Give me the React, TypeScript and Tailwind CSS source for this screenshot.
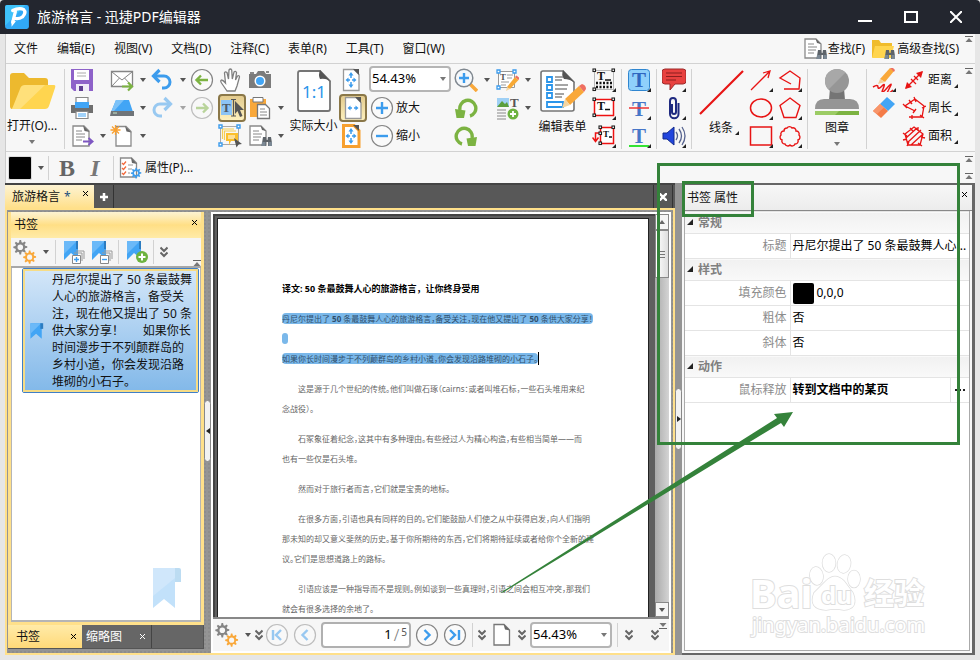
import type { ReactNode } from "react";

const MENUS = ["文件", "编辑(E)", "视图(V)", "文档(D)", "注释(C)", "表单(R)", "工具(T)", "窗口(W)"];

const BOOKMARK_TEXT = [
  "丹尼尔提出了 50 条最鼓舞",
  "人心的旅游格言，备受关",
  "注，现在他又提出了 50 条",
  "供大家分享！      如果你长",
  "时间漫步于不列颠群岛的",
  "乡村小道，你会发现沿路",
  "堆砌的小石子。",
];

const PARAGRAPHS: string[][] = [
  ["这是源于几个世纪的传统。他们叫做石琢（cairns：或者叫堆石标，一些石头堆用来纪", "念战役）。"],
  ["石冢象征着纪念，这其中有多种理由。有些经过人为精心构造，有些相当简单——而", "也有一些仅是石头堆。"],
  ["然而对于旅行者而言，它们就是宝贵的地标。"],
  [
    "在很多方面，引语也具有同样的目的。它们能鼓励人们使之从中获得启发，向人们指明",
    "那未知的却又意义斐然的历史。基于你所期待的东西，它们将期待延续或者给你个全新的建",
    "议。它们是思想道路上的路标。",
  ],
  ["引语应该是一种指导而不是规则。例如谈到一些真理时，引语之间会相互冲突，那我们", "就会有很多选择的余地了。"],
];

/* ---------- small building blocks ---------- */

function Icon({ children, className = "size-6" }: { children: ReactNode; className?: string }) {
  return (
    <svg viewBox="0 0 24 24" className={`shrink-0 ${className}`} fill="none" aria-hidden="true">
      {children}
    </svg>
  );
}

function Caret({ className = "h-1 w-1.5 text-[#555]" }: { className?: string }) {
  return (
    <svg viewBox="0 0 6 4" className={`shrink-0 ${className}`} aria-hidden="true">
      <path d="M0 0h6L3 4z" fill="currentColor" />
    </svg>
  );
}

/** Tool button; `menu` adds the drop-down caret next to the icon. */
function Tool({ label, menu, faded, active, children }: {
  label: string;
  menu?: boolean;
  faded?: boolean;
  active?: boolean;
  children: ReactNode;
}) {
  return (
    <button
      type="button"
      aria-label={label}
      className={`flex h-7 items-center gap-1.5 ${faded ? "opacity-50" : ""} ${
        active ? "w-7 justify-center rounded border-2 border-[#8a7748] bg-gradient-to-b from-[#e3cb8d] to-[#fdf0bd]" : ""
      }`}
    >
      {children}
      {menu ? <Caret /> : null}
    </button>
  );
}

/** Tool with the tiny corner triangle that opens a flyout. */
function Flyout({ label, text, children }: { label: string; text?: string; children: ReactNode }) {
  return (
    <button type="button" aria-label={label} className="relative flex h-7 items-center gap-0.5 pr-1">
      {children}
      {text ? <span>{text}</span> : null}
      <Corner className={text ? "-right-0.5 bottom-1.5" : "right-1 bottom-0.5"} />
    </button>
  );
}

function Corner({ className }: { className: string }) {
  return (
    <svg viewBox="0 0 4 4" className={`absolute size-1 ${className}`} aria-hidden="true">
      <path d="M4 0v4H0z" fill="#222" />
    </svg>
  );
}

function Col({ children, className = "" }: { children: ReactNode; className?: string }) {
  return <div className={`flex shrink-0 flex-col items-start ${className}`}>{children}</div>;
}

function Sep({ className = "mx-[5px] h-20" }: { className?: string }) {
  return <div className={`w-px shrink-0 self-center bg-[#d2d2d2] ${className}`} />;
}

function CollapseMark({ className = "" }: { className?: string }) {
  return (
    <svg viewBox="0 0 8 6" className={`h-1.5 w-2 shrink-0 ${className}`} aria-hidden="true">
      <path d="M0 .5h8" stroke="#666" />
      <path d="M4 2l3.5 4h-7z" fill="#777" />
    </svg>
  );
}

function Chevrons() {
  return (
    <svg viewBox="0 0 8 12" className="h-3 w-2 shrink-0" fill="none" stroke="#666" strokeWidth="2" aria-hidden="true">
      <path d="M.5 1.5L4 5l3.5-3.5M.5 6.500L4 10l3.500-3.500" />
    </svg>
  );
}

function CloseX({ className = "size-[5px] text-black", width = 1.2 }: { className?: string; width?: number }) {
  return (
    <svg viewBox="0 0 6 6" className={`shrink-0 ${className}`} stroke="currentColor" strokeWidth={width} aria-hidden="true">
      <path d="M0 0l6 6M6 0L0 6" />
    </svg>
  );
}

/* ---------- icons ---------- */

function Sheet() {
  return (
    <>
      <path d="M4 1.500h10l5.500 5.500v15H4z" fill="#fff" stroke="#777" strokeWidth="1.300" />
      <path d="M13.500 1L20 7.500 15 6.500z" fill="#666" />
    </>
  );
}

function Binoculars() {
  return (
    <g fill="#5d6369">
      <path d="M15 13h3l.5 3h1l.5-3h3l1.500 9h-4.500v-4h-2v4H13.500z" />
      <path d="M14 18h3.500v4H13.500zM20.500 18H24v4h-3.500z" fill="#7b8894" />
    </g>
  );
}

function FindIcon() {
  return (
    <Icon>
      <path d="M2 2h11l5 5v14H2z" fill="#fff" stroke="#8a8a8a" strokeWidth="1.300" />
      <path d="M12.500 1.500L18 7l-4-1z" fill="#666" />
      <path d="M5 7h6M5 10h9M5 13h8M5 16h6" stroke="#888" strokeWidth="1.200" />
      <Binoculars />
    </Icon>
  );
}

const GEAR = "M10 2h2l.6 2.700 1.500.6 2.300-1.500 1.500 1.500-1.500 2.300.6 1.500 2.700.6v2l-2.700.6-.6 1.500 1.500 2.300-1.500 1.500-2.300-1.500-1.500.6L12 20h-2l-.6-2.800-1.500-.6-2.300 1.500-1.500-1.500 1.500-2.300-.6-1.500L2.300 12v-2L5 9.400l.6-1.500-1.500-2.300 1.500-1.500 2.300 1.500L9.400 5zM11 7.500a3.500 3.500 0 100 7 3.500 3.500 0 000-7z";

function Gears() {
  return (
    <Icon>
      <g transform="translate(-1.500 -1.500) scale(.8)"><path d={GEAR} fill="#858585" fillRule="evenodd" /></g>
      <g transform="translate(8.500 9) scale(.74)"><path d={GEAR} fill="#f9a83a" fillRule="evenodd" /></g>
    </Icon>
  );
}

function Ribbon({ children }: { children?: ReactNode }) {
  return (
    <Icon>
      <path d="M2 1h14v18l-7-6-7 7z" fill="#42a5f5" />
      <path d="M2 1h13L2 14z" fill="#6bb9f8" />
      <path d="M14 1h2v8h-2z" fill="#2c7cc0" />
      {children}
    </Icon>
  );
}

function Pencil() {
  return (
    <>
      <path d="M12 19L20 9l3.500 3-8.500 9z" fill="#f7a935" />
      <path d="M20 9l1.500-1.500L24.500 10l-1 2z" fill="#ef6f61" />
      <path d="M12 19l-1 4 4-2z" fill="#f5d5a0" />
    </>
  );
}

function FitIcon({ wide, bordered }: { wide?: boolean; bordered?: boolean }) {
  return (
    <Icon>
      <path d="M4.500 1.500H15l5 5v16H4.500z" fill="#fff" stroke={bordered ? "#f7a02f" : "#999"} strokeWidth={bordered ? 3 : 1.300} />
      <path d="M14 1h6v6z" fill="#555" />
      <path d="M9.500 9.500L6.500 12l3 2.500zM14.500 9.500l3 2.500-3 2.500z" fill="#3c9ced" />
      <path d="M9 12h2M13 12h2" stroke="#3c9ced" strokeWidth="1.500" />
      {wide ? null : (
        <>
          <path d="M9.500 7.500L12 4l2.500 3.500zM9.500 16.500L12 20l2.500-3.500z" fill="#3c9ced" />
          <path d="M12 7v3M12 14v3" stroke="#3c9ced" strokeWidth="1.500" />
        </>
      )}
    </Icon>
  );
}

function CircleIcon({ d, color = "#3c9ced" }: { d: string; color?: string }) {
  return (
    <Icon>
      <circle cx="12" cy="12" r="10.500" fill="#fafafa" stroke="#858585" strokeWidth="1.200" />
      <path d={d} stroke={color} strokeWidth="2.400" />
    </Icon>
  );
}

function RotateIcon({ flip }: { flip?: boolean }) {
  return (
    <Icon className={`size-6 ${flip ? "-scale-x-100" : ""}`}>
      <path d="M16 20A8 8 0 1 0 6 14" stroke="#7cb342" strokeWidth="3.400" />
      <path d="M1 13l10.500 1.500L10 22H2.500z" fill="#7cb342" />
    </Icon>
  );
}

function Squares({ at }: { at: number[][] }) {
  return (
    <>
      {at.map(([x, y]) => (
        <rect key={`${x}-${y}`} x={x} y={y} width="2.500" height="2.500" fill="#fff" stroke="#222" strokeWidth="1.100" />
      ))}
    </>
  );
}

function SerifT({ x, y, size, fill }: { x: number; y: number; size: number; fill: string }) {
  return (
    <text x={x} y={y} fontSize={size} fontFamily="Liberation Serif, serif" fontWeight="bold" fill={fill}>T</text>
  );
}

const PENTAGON = "M12 2l10 7.500-4 12H6l-4-12z";

function PawMark() {
  return (
    <svg viewBox="0 0 52 58" className="h-[58px] w-[52px]" fill="#fff" stroke="#dedede" strokeWidth="1.500" aria-hidden="true">
      <ellipse cx="20" cy="10" rx="6.500" ry="9" />
      <ellipse cx="35" cy="11" rx="6.500" ry="9" transform="rotate(10 35 11)" />
      <ellipse cx="7.500" cy="23" rx="6.500" ry="9" transform="rotate(-8 7 23)" />
      <ellipse cx="45" cy="26" rx="6" ry="8.500" />
      <path d="M17 28q9-9 18 0l9 12q6 16-9 17-9-2-18 0-18-1-12-17z" />
    </svg>
  );
}

/* ---------- window chrome ---------- */

function TitleBar() {
  return (
    <header className="flex h-[34px] shrink-0 items-center rounded-t bg-[#23262f] pr-[18px] pl-1 text-white">
      <Icon className="size-[26px]">
        <rect x="1" y="1" width="22" height="22" rx="2" fill="#31a9f6" />
        <path d="M1 20L20 1H3a2 2 0 00-2 2z" fill="#3fc2fa" />
        <path d="M8 6q6-3 10-1 3 3-1 7-3 2-6 1.500M10.500 7L8 17" stroke="#fff" strokeWidth="3" strokeLinecap="round" />
        <path d="M7 15l4 1-4 5z" fill="#fff" />
      </Icon>
      <h1 className="ml-[7px] flex-1 text-sm">旅游格言 - 迅捷PDF编辑器</h1>
      <div className="flex items-center gap-8">
        <button type="button" aria-label="最小化" className="flex size-3.5 items-center pt-2">
          <span className="h-0.5 w-full bg-white" />
        </button>
        <button type="button" aria-label="最大化" className="h-3 w-3.5 border-2 border-white" />
        <button type="button" aria-label="关闭">
          <CloseX className="size-3 text-white" width={1} />
        </button>
      </div>
    </header>
  );
}

function MenuBar() {
  return (
    <nav className="flex h-[30px] shrink-0 items-center border-b border-[#d2d2d2] pr-0.5 pl-2">
      <div className="flex flex-1 gap-[19px]">
        {MENUS.map((m) => (
          <button key={m} type="button">{m}</button>
        ))}
      </div>
      <button type="button" className="flex items-center gap-px">
        <FindIcon />
        查找(F)
      </button>
      <button type="button" className="ml-1.5 flex items-center gap-0.5">
        <Icon>
          <path d="M1 3h7l2 3h11v14H1z" fill="#f0bc2c" />
          <path d="M4 9h19l-3 12H1z" fill="#ffd54f" />
          <Binoculars />
        </Icon>
        高级查找(S)
      </button>
      <CollapseMark className="mt-0.5 ml-1.5 self-start" />
    </nav>
  );
}

function FileTools() {
  return (
    <>
      <button type="button" className="flex w-[58px] shrink-0 flex-col items-center pr-1.5">
        <svg viewBox="0 0 48 40" className="mt-1.5 h-10 w-12" aria-hidden="true">
          <path d="M2 4q0-3 3-3h11l5 5h16q3 0 3 3v22L4 37q-2 0-2-3z" fill="#edb92e" />
          <path d="M17 13h29q2 0 1 3l-6 18q-1 3-4 3H4z" fill="#ffd54f" />
          <path d="M17 13h20L12 37H4l8-20q1-4 5-4z" fill="#ffe07a" />
        </svg>
        <span className="mt-1.5 leading-4 whitespace-nowrap">打开(O)...</span>
        <Caret className="mt-1.5 h-1 w-2 text-[#777]" />
      </button>
      <Sep className="mr-[5px] h-20" />
      <Col className="w-10">
        <Tool label="保存">
          <Icon>
            <path d="M1 1h22v22H4l-3-3z" fill="#8e62c9" />
            <path d="M4 2h15v10H4z" fill="#fff" />
            <path d="M7 5h9M7 8h9" stroke="#aaa" />
            <path d="M6 16h13v7H6z" fill="#f0eaf8" />
            <path d="M9 18h4v5H9z" fill="#5e3d91" />
          </Icon>
        </Tool>
        <Tool label="打印">
          <Icon>
            <path d="M6 1.500h12V7H6z" fill="#fff" stroke="#888" strokeWidth="1.200" />
            <path d="M1 9h22v8H1z" fill="#6f6f6f" />
            <path d="M5 6h14v6H5z" fill="#42a5f5" />
            <path d="M6 15.500h12v7H6z" fill="#fff" stroke="#888" strokeWidth="1.200" />
            <path d="M8 18h8M8 20h8" stroke="#42a5f5" />
          </Icon>
        </Tool>
        <Tool label="导出" menu>
          <Icon>
            <path d="M3 2h11l5 5v15H3z" fill="#fff" stroke="#8a8a8a" strokeWidth="1.300" />
            <path d="M13 1.500L19.500 8 14.500 7z" fill="#666" />
            <path d="M6 7h6M6 10h9M6 13h9M6 16h6" stroke="#888" />
            <path d="M13 17.500h9M18.500 14l4 3.500-4 3.500" stroke="#7e57c2" strokeWidth="2" />
          </Icon>
        </Tool>
      </Col>
      <Col className="w-10">
        <Tool label="邮件" menu>
          <Icon>
            <path d="M1.500 3.500h21v15h-21z" fill="#fff" stroke="#858585" strokeWidth="1.300" />
            <path d="M2 4l10 8L22 4M2 18l7.500-8M22 18l-7.500-8" stroke="#858585" />
            <path d="M12 18.500h9M18 14.500l4 4-4 4" stroke="#7cb342" strokeWidth="2.200" />
          </Icon>
        </Tool>
        <Tool label="扫描" menu>
          <Icon>
            <path d="M6 4h13l4 12H1z" fill="#42a5f5" />
            <path d="M6 4h8L4 15H1.500z" fill="#7cc2f8" />
            <path d="M1 15h23v5H0z" fill="#6f7478" />
            <path d="M3 17h4" stroke="#c8e6c9" />
          </Icon>
        </Tool>
        <Tool label="新建" menu>
          <Icon>
            <path d="M6 2.500h10l5 5V22H6z" fill="#fff" stroke="#8a8a8a" strokeWidth="1.300" />
            <path d="M15 2L21.500 8.500 16.500 7.500z" fill="#666" />
            <path d="M5.500 1v10M.5 6h10M2 2.500l7 7M9 2.500l-7 7" stroke="#f9a02f" strokeWidth="1.300" />
          </Icon>
        </Tool>
      </Col>
      <Col className="w-10">
        <Tool label="撤销" menu>
          <Icon>
            <path d="M5 8h9a6 6 0 010 12h-2" stroke="#3c9ced" strokeWidth="3" />
            <path d="M9.500 2L3.500 8l6 6" stroke="#3c9ced" strokeWidth="3.200" />
          </Icon>
        </Tool>
        <Tool label="重做" menu faded>
          <Icon>
            <path d="M19 8h-9a6 6 0 000 12h2" stroke="#3c9ced" strokeWidth="3" />
            <path d="M14.500 2l6 6-6 6" stroke="#3c9ced" strokeWidth="3.200" />
          </Icon>
        </Tool>
      </Col>
      <Col className="w-7">
        <Tool label="后退"><CircleIcon d="M18 12H7M11 7.500L6.500 12l4.500 4.500" color="#7cb342" /></Tool>
        <Tool label="前进" faded><CircleIcon d="M6 12h11M13 7.500l4.500 4.500-4.500 4.500" color="#7cb342" /></Tool>
      </Col>
      <Col className="w-[30px] items-center pr-0.5">
        <Tool label="手形工具">
          <Icon>
            <path d="M9 23l-5.500-8q-1.500-2.500 0-3 1.500 0 4 3L6.500 5q.5-2 2.500-.5L10.500 11 11 2q1.500-2 2.700 0l.6 9 1.700-7q1.500-1.500 2.500.5L17.500 12l2-4q2-1 2 1L19 18l-2 5z" fill="#fff" stroke="#808080" strokeWidth="1.300" />
          </Icon>
        </Tool>
        <Tool label="选择文本" active>
          <Icon>
            <path d="M1 4h11v15H1z" fill="#8cc4f5" />
            <SerifT x={2} y={16} size={13} fill="#4e5a66" />
            <path d="M11 3.500h5M11 20h5M13.500 4v16" stroke="#555" strokeWidth="1.200" />
            <path d="M15 5l9 9h-4l2.500 6-2.500 1-2.500-6L15 18z" fill="#555" />
          </Icon>
        </Tool>
        <Tool label="选择注释">
          <Icon>
            <path d="M2.500 2.500h18v18h-18z" stroke="#aaa" />
            <path d="M4.500 15V5H16M6.500 16V7H18" stroke="#f6cd52" strokeWidth="1.200" />
            <path d="M8 9h12v8h-7l-2 4v-4H8z" fill="#fbc02d" />
            <path d="M10 12h7M10 14h7" stroke="#fff" />
            <path d="M1 1h3v3H1zM19 1h3v3h-3zM1 19h3v3H1z" fill="#fff" stroke="#3c9ced" strokeWidth="1.400" />
            <path d="M16 14l8 6-3.500.5-2 3z" fill="#555" />
          </Icon>
        </Tool>
      </Col>
      <Col className="w-10">
        <Tool label="快照">
          <Icon>
            <path d="M1 6h7l2-3h6l2 3h5v14H1z" fill="#7b7b7b" />
            <path d="M2 5h4M18 4h3" stroke="#666" strokeWidth="1.500" />
            <circle cx="12" cy="13" r="5.500" fill="#fff" />
            <circle cx="12" cy="13" r="4" fill="#42a5f5" />
          </Icon>
        </Tool>
        <Tool label="粘贴" menu>
          <Icon>
            <path d="M2 3h16v18H2z" fill="#f9a83a" />
            <path d="M5 1.500h10V6H5z" fill="#fff" stroke="#777" />
            <path d="M9.500 8.500h8l4 4v10H9.500z" fill="#fff" stroke="#777" strokeWidth="1.300" />
            <path d="M12 13h5M12 16h7M12 19h7" stroke="#888" />
          </Icon>
        </Tool>
        <Tool label="搜索" menu><FindIcon /></Tool>
      </Col>
    </>
  );
}

function ZoomTools() {
  return (
    <>
      <button type="button" className="flex w-[51px] shrink-0 flex-col items-center">
        <svg viewBox="0 0 34 42" className="mt-1 h-[42px] w-[34px]" aria-hidden="true">
          <path d="M3 1h20l10 10v28q0 2-2 2H3q-2 0-2-2V3q0-2 2-2z" fill="#fff" stroke="#757575" strokeWidth="1.800" />
          <path d="M23 0l11 12q-4-4-11-3-2-4 0-9z" fill="#555" />
          <text x="17" y="28" textAnchor="middle" fontSize="17" fill="#2b95ea" fontFamily="Noto Sans, sans-serif">1:1</text>
        </svg>
        <span className="mt-1.5 leading-4">实际大小</span>
      </button>
      <Col className="w-[30px] items-center">
        <Tool label="适合页面"><FitIcon /></Tool>
        <Tool label="适合宽度" active><FitIcon wide /></Tool>
        <Tool label="适合可见区域"><FitIcon bordered /></Tool>
      </Col>
      <div className="flex w-[85px] shrink-0 flex-col">
        <ZoomSelect id="zoom-top" className="h-[26px] w-[82px]" />
        <button type="button" className="mt-0.5 flex h-7 items-center gap-0.5 pl-px">
          <CircleIcon d="M12 6v12M6 12h12" />
          放大
        </button>
        <button type="button" className="flex h-7 items-center gap-0.5 pl-px">
          <CircleIcon d="M6 12h12" />
          缩小
        </button>
      </div>
      <Col className="w-[41px]">
        <Tool label="放大镜" menu>
          <Icon>
            <path d="M16 16l7 7" stroke="#f9a83a" strokeWidth="3.500" />
            <circle cx="10" cy="10" r="8.800" fill="#f5f8fb" stroke="#808890" strokeWidth="1.500" />
            <path d="M10 5v10M5 10h10" stroke="#3c9ced" strokeWidth="2.400" />
          </Icon>
        </Tool>
        <Tool label="逆时针旋转"><RotateIcon /></Tool>
        <Tool label="顺时针旋转"><RotateIcon flip /></Tool>
      </Col>
      <Col className="w-[41px]">
        <Tool label="编辑内容" menu>
          <Icon>
            <path d="M3.500 3.500h16v16h-16z" fill="#fff" stroke="#999" />
            <SerifT x={5} y={12} size={9} fill="#555" />
            <path d="M12 7h6M12 10h5M6 14h8M6 17h5" stroke="#999" />
            <path d="M2 2h3v3H2zM18 2h3v3h-3zM2 18h3v3H2z" fill="#fff" stroke="#3c9ced" strokeWidth="1.300" />
            <Pencil />
          </Icon>
        </Tool>
        <Tool label="添加内容" menu>
          <Icon>
            <path d="M2 2h12v9H2z" fill="#9fd0f5" />
            <path d="M2 11l5-6 3 3 2-2 2 5z" fill="#5b9e3d" />
            <SerifT x={15} y={11} size={13} fill="#555" />
            <path d="M2 14h9M2 17h9M2 20h9M2 23h9" stroke="#888" />
            <circle cx="18" cy="18" r="5.500" fill="#6db33f" />
            <path d="M18 15v6M15 18h6" stroke="#fff" strokeWidth="1.800" />
          </Icon>
        </Tool>
      </Col>
      <button type="button" className="flex w-[53px] shrink-0 flex-col items-center">
        <svg viewBox="0 0 48 44" className="mt-[3px] h-11 w-12" aria-hidden="true">
          <path d="M4 2h20l11 11v27q0 2-2 2H4q-2 0-2-2V4q0-2 2-2z" fill="#fff" stroke="#757575" strokeWidth="1.600" />
          <path d="M24 1l12 13q-5-4-11-4-3-4-1-9z" fill="#555" />
          <g fill="none" stroke="#2b95ea" strokeWidth="1.800">
            <path d="M8 8h5v5H8zM8 16h5v5H8zM8 24h5v5H8zM8 33h16v5H8z" />
          </g>
          <path d="M16 8h8M16 11h7M16 16h13M16 20h12M16 25h9M16 28h7" stroke="#888" strokeWidth="1.300" />
          <path d="M26 30l14-13 5 6-14 13z" fill="#f9a83a" />
          <path d="M40 17l3-2q4 1 4 5l-2 3z" fill="#ef6f61" />
          <path d="M26 30l-3 9 8-3z" fill="#f5d5a0" />
        </svg>
        <span className="mt-1.5 leading-4">编辑表单</span>
      </button>
    </>
  );
}

function CommentTools() {
  return (
    <>
      <Col className="ml-[3px] w-6">
        <Flyout label="打字机">
          <Icon>
            <path d="M2.500 2.500h19v19h-19z" stroke="#777" strokeDasharray="1 1" />
            <SerifT x={5} y={12} size={12} fill="#111" />
            <path d="M13 12h6" stroke="#111" strokeWidth="1.500" />
            <path d="M4 15h16M4 19h16" stroke="#111" strokeWidth="2.400" strokeDasharray="2 1.500" />
            <Squares at={[[1, 1], [20, 1], [1, 20]]} />
          </Icon>
        </Flyout>
        <Flyout label="文本框">
          <Icon>
            <path d="M2.500 3.500h19v16h-19z" fill="#fff" stroke="#e11" strokeWidth="1.500" />
            <SerifT x={5} y={14} size={12} fill="#111" />
            <path d="M13 13.500h5" stroke="#111" strokeWidth="1.500" />
            <Squares at={[[1, 2], [20, 2], [1, 18]]} />
          </Icon>
        </Flyout>
        <Flyout label="标注">
          <Icon>
            <path d="M8.500 3.500h13v16h-13z" fill="#fff" stroke="#e11" strokeWidth="1.500" />
            <path d="M8 9H3.500v7M.5 13.500l3 4 3-4" stroke="#e11" strokeWidth="1.500" />
            <SerifT x={11} y={13} size={9} fill="#111" />
            <path d="M17 13h3" stroke="#111" strokeWidth="1.500" />
            <Squares at={[[7, 2], [20, 2], [7, 18], [7, 8]]} />
          </Icon>
        </Flyout>
      </Col>
      <Sep />
      <Col className="w-6">
        <Flyout label="高亮">
          <Icon>
            <rect x="1.500" y="1.500" width="21" height="21" rx="3" fill="#8fd0fb" stroke="#2f86d0" />
            <SerifT x={5} y={19} size={21} fill="#2f66c0" />
          </Icon>
        </Flyout>
        <Flyout label="删除线">
          <Icon>
            <SerifT x={5} y={20} size={21} fill="#4776c8" />
            <path d="M2 12h20" stroke="#e33" strokeWidth="1.500" />
          </Icon>
        </Flyout>
        <Flyout label="下划线">
          <Icon>
            <SerifT x={5} y={19} size={21} fill="#4776c8" />
            <path d="M2 22h20" stroke="#1de01d" strokeWidth="1.800" />
          </Icon>
        </Flyout>
      </Col>
      <Sep />
      <Col className="w-6">
        <Flyout label="便签">
          <Icon>
            <path d="M3 1h18q3 0 3 3v9q0 3-3 3h-8l-5 6v-6H3q-3 0-3-3V4q0-3 3-3z" fill="#e8413f" stroke="#9c2b2b" />
            <path d="M4 5h16M4 8.500h16M4 12h10" stroke="#8b1f1f" />
          </Icon>
        </Flyout>
        <Flyout label="附件">
          <Icon>
            <path d="M10 8v8a2 2 0 004 0V5a3 3 0 00-6 0v13a4 4 0 008.500 0V7" stroke="#1f2a80" strokeWidth="2" />
          </Icon>
        </Flyout>
        <Flyout label="声音">
          <Icon>
            <path d="M1 9h4l7-6v18l-7-6H1z" fill="#2145dd" stroke="#132a8c" />
            <path d="M14 8q3 4 0 8M17 5q5 7 0 14M20 3q6 9 0 18" stroke="#56638f" strokeWidth="1.300" />
          </Icon>
        </Flyout>
      </Col>
      <Sep />
    </>
  );
}

function DrawTools() {
  return (
    <>
      <button type="button" className="relative flex w-[52px] shrink-0 flex-col items-center pr-1">
        <svg viewBox="0 0 48 48" className="mt-0.5 size-12" aria-hidden="true">
          <path d="M3 46L46 3" stroke="#e81414" strokeWidth="2.200" />
        </svg>
        <span className="mt-1 leading-4">线条</span>
        <Corner className="right-2.5 bottom-4" />
      </button>
      <Col className="w-[29px]">
        <Flyout label="箭头">
          <Icon><path d="M2 22L21 3M14 5l7-2-2 7" stroke="#e81414" strokeWidth="1.300" /></Icon>
        </Flyout>
        <Flyout label="椭圆">
          <Icon><ellipse cx="12" cy="12" rx="10.500" ry="9" stroke="#e81414" strokeWidth="1.500" /></Icon>
        </Flyout>
        <Flyout label="矩形">
          <Icon><path d="M1.500 3h21v18h-21z" stroke="#e81414" strokeWidth="1.500" /></Icon>
        </Flyout>
      </Col>
      <Col className="w-6">
        <Flyout label="折线">
          <Icon><path d="M13 16L2 10l10-7 10 7-1 11H6" stroke="#e81414" strokeWidth="1.400" /></Icon>
        </Flyout>
        <Flyout label="多边形">
          <Icon><path d={PENTAGON} stroke="#e81414" strokeWidth="1.400" /></Icon>
        </Flyout>
        <Flyout label="云朵">
          <Icon>
            <path d="M9 4a3 3 0 015 0 3 3 0 014 3 3 3 0 013 4 3 3 0 01-1 5 3 3 0 01-3 4 3 3 0 01-5 1 3 3 0 01-5-1 3 3 0 01-3-4 3 3 0 01-1-5 3 3 0 013-4 3 3 0 013-3z" stroke="#e81414" strokeWidth="1.400" />
          </Icon>
        </Flyout>
      </Col>
      <Sep />
      <button type="button" className="flex w-12 shrink-0 flex-col items-center">
        <svg viewBox="0 0 46 48" className="mt-0.5 h-12 w-[46px]" aria-hidden="true">
          <path d="M16 20h14l1 12H15z" fill="#757575" />
          <circle cx="23" cy="13" r="12" fill="#969696" />
          <path d="M14.500 21.500a12 12 0 0117-17z" fill="#a8a8a8" />
          <path d="M1 41q0-10 9-10h26q9 0 9 10z" fill="#959595" />
          <path d="M1 43h44v4H1z" fill="#7cb342" />
          <path d="M1 43h24l-4 4H1z" fill="#9ccc65" />
        </svg>
        <span className="mt-1 leading-4">图章</span>
        <Caret className="mt-1.5 h-1 w-2 text-[#777]" />
      </button>
      <Sep />
      <Col className="w-[30px]">
        <Flyout label="铅笔">
          <Icon>
            <path d="M8 11L18 0l4 3-9 11z" fill="#f9a83a" />
            <path d="M18 0l2-1 3 3-1 2z" fill="#ef6f61" />
            <path d="M8 11l-2 5 7-2z" fill="#f3cf9a" />
            <path d="M1 19q5-3 5 0t4-1 1 3 4-1 2 1 4 1" stroke="#e81414" strokeWidth="1.500" />
          </Icon>
        </Flyout>
        <Tool label="橡皮擦">
          <Icon>
            <path d="M15 1l8 7-7 7-8-7z" fill="#42a5f5" />
            <path d="M8 8l8 7-7 7-8-7z" fill="#f47c48" />
            <path d="M8 8l4 3.500L5 18l-4-3z" fill="#f8956a" />
          </Icon>
        </Tool>
      </Col>
      <Col>
        <Flyout label="距离" text="距离">
          <Icon>
            <path d="M4 20L20 4M9 11l5 5M12 8l4 4" stroke="#e81414" strokeWidth="1.300" />
            <path d="M3 21l2-7 5 5zM21 3l-2 7-5-5z" fill="#e81414" />
          </Icon>
        </Flyout>
        <Flyout label="周长" text="周长">
          <Icon>
            <path d="M13 15L3 10l10-7 9 7-2 11H7M1 8l4 4M12 1l2 5M20 12l4-2M18 19l4 3M7 4l3 4M10 19v4M11 17l3-4" stroke="#e81414" strokeWidth="1.300" />
          </Icon>
        </Flyout>
        <Flyout label="面积" text="面积">
          <Icon>
            <path d="M12 3l9 7-3 11H6L3 10zM4 14L15 4M5 19L19 6M9 21L21 10M8 4l3 3M16 3v4M1 9l4 3M19 13l4 1M16 19l4 3M5 22l2-4M1 16l4-1" stroke="#e81414" strokeWidth="1.300" />
          </Icon>
        </Flyout>
      </Col>
    </>
  );
}

function Toolbar() {
  return (
    <div className="flex h-[88px] shrink-0 border-b border-[#d2d2d2]">
      <div className="flex min-w-0 flex-1 pt-0.5">
        <FileTools />
        <ZoomTools />
        <CommentTools />
        <DrawTools />
      </div>
      <CollapseMark className="mt-1 mr-0.5" />
    </div>
  );
}

function FormatBar() {
  return (
    <div className="flex h-[31px] shrink-0 items-center pl-0.5">
      <button type="button" aria-label="颜色" className="flex items-center gap-1.5">
        <span className="size-6 rounded-xs border border-[#ddd] bg-black" />
        <Caret />
      </button>
      <Sep className="mr-1 ml-1 h-6" />
      <button type="button" aria-label="粗体" className="w-7 font-['Liberation_Serif',serif] text-2xl leading-7 font-bold text-[#666]">B</button>
      <button type="button" aria-label="斜体" className="w-7 font-['Liberation_Serif',serif] text-2xl leading-7 font-bold text-[#777] italic">I</button>
      <Sep className="mr-[5px] ml-1 h-6" />
      <button type="button" className="flex items-center gap-0.5">
        <Icon>
          <path d="M1.500 2h11l5 5v14h-16z" fill="#fff" stroke="#8a8a8a" strokeWidth="1.300" />
          <path d="M12 1.500L18 8l-5-1z" fill="#666" />
          <path d="M3 7l1.500 1.500L7 5.500M3 12l1.500 1.500L7 10.500M3 17l1.500 1.500L7 15.500" stroke="#f26a3d" strokeWidth="1.300" />
          <path d="M9 9h5M9 13h4M9 17h2" stroke="#999" />
          <g transform="translate(10.500 10.500) scale(.6)"><path d={GEAR} fill="#3c9ced" fillRule="evenodd" /></g>
        </Icon>
        属性(P)...
      </button>
      <div className="ml-auto flex h-full flex-col justify-between py-1 pr-0.5">
        <CollapseMark />
        <CollapseMark />
      </div>
    </div>
  );
}

function ZoomSelect({ id, className }: { id: string; className: string }) {
  return (
    <div className={`relative flex items-center ${className}`}>
      <select
        id={id}
        aria-label="缩放比例"
        className="size-full appearance-none rounded border-2 border-[#b5b5b5] bg-white pl-px text-[13px] text-black"
        defaultValue="54.43%"
      >
        <option>54.43%</option>
        <option>100%</option>
      </select>
      <Caret className="pointer-events-none absolute right-1 h-1 w-2 text-[#777]" />
    </div>
  );
}

/* ---------- bookmarks pane ---------- */

function BookmarksPane() {
  return (
    <aside className="flex w-[196px] shrink-0 flex-col pt-0.5">
      <div className="flex min-h-0 flex-1 flex-col border-x-[3px] border-b-[3px] border-[#ffe08a] bg-white">
        <div className="flex h-[26px] shrink-0 items-center justify-between bg-gradient-to-b from-[#fdf3d2] via-[#ffdf85] to-[#ffeba8] pr-1 pl-[3px]">
          <h2>书签</h2>
          <button type="button" aria-label="关闭书签" className="mb-1.5"><CloseX /></button>
        </div>
        <div className="flex h-[30px] shrink-0 items-center border-b-2 border-[#a8a8a8] bg-[#f5f5f5] pl-0.5">
          <Tool label="选项" menu><Gears /></Tool>
          <Sep className="mr-1.5 ml-1.5 h-6" />
          <div className="flex gap-1">
            <Tool label="展开全部">
              <Ribbon>
                <path d="M14 11h8v8M12 13h8v8" stroke="#999" />
                <path d="M10.500 15.500h8v8h-8z" fill="#fff" stroke="#888" />
                <path d="M14.500 17v5M12 19.500h5" stroke="#3c9ced" strokeWidth="1.400" />
              </Ribbon>
            </Tool>
            <Tool label="折叠全部">
              <Ribbon>
                <path d="M14 11h8v8M12 13h8v8" stroke="#999" />
                <path d="M10.500 15.500h8v8h-8z" fill="#fff" stroke="#888" />
                <path d="M12 19.500h5" stroke="#3c9ced" strokeWidth="1.400" />
              </Ribbon>
            </Tool>
          </div>
          <Sep className="mr-1.5 ml-1 h-6" />
          <Tool label="添加书签">
            <Ribbon>
              <circle cx="17" cy="17" r="6" fill="#6db33f" />
              <path d="M17 13.500v7M13.500 17h7" stroke="#fff" strokeWidth="2" />
            </Ribbon>
          </Tool>
          <Sep className="mr-1.5 ml-1 h-6" />
          <button type="button" aria-label="更多"><Chevrons /></button>
          <CollapseMark className="ml-auto self-end" />
        </div>
        <div className="flex min-h-0 flex-1 flex-col justify-between border-x border-b-2 border-[#b5b5b5] pr-px pl-2.5">
          <ul>
            <li className="rounded-xs border border-[#3f7fc8]">
              <button type="button" className="flex w-full items-center gap-1.5 border-2 border-[#f6dc86] bg-gradient-to-b from-[#d3e6f8] to-[#83b9e9] pl-1 text-left">
                <Icon className="h-5 w-[17px]">
                  <path d="M2 1h16v22l-8-7-8 7z" fill="#42a5f5" />
                  <path d="M2 1h15L2 16z" fill="#6bb9f8" />
                  <path d="M16 1h4v8h-4z" fill="#2c7cc0" />
                </Icon>
                <span className="overflow-hidden leading-[17px] whitespace-pre">{BOOKMARK_TEXT.join("\n")}</span>
              </button>
            </li>
          </ul>
          <svg viewBox="0 0 28 40" className="mr-[18px] mb-3 h-10 w-7 self-end" aria-hidden="true">
            <path d="M0 0h22v40l-11-9-11 9z" fill="#c2e1fa" />
            <path d="M0 0h22v10L0 28z" fill="#d0e7fb" />
            <path d="M22 0h4q2 0 2 2v12h-6z" fill="#bcdcf2" />
          </svg>
        </div>
      </div>
      <div className="mb-1 flex h-6 shrink-0 border-r border-b border-[#555] bg-[#666]">
        <button type="button" className="flex w-[74px] items-center justify-between bg-gradient-to-b from-[#ffeba8] to-[#ffd978] pr-1.5 pl-2">
          书签<CloseX />
        </button>
        <button type="button" className="flex w-[70px] items-center justify-between border-r border-[#444] pr-1.5 pl-1 text-white">
          缩略图<CloseX className="size-[5px] text-white" />
        </button>
      </div>
    </aside>
  );
}

/** Strip between two panes with its collapse handle. */
function Splitter({ arrow, className }: { arrow: string; className: string }) {
  return (
    <div className={`flex w-[7px] shrink-0 flex-col ${className}`}>
      <button type="button" aria-label="折叠面板" className="flex h-[62px] items-center justify-center rounded border border-[#888] bg-[#f2f2f2]">
        <svg viewBox="0 0 4 6" className="h-1.5 w-1" aria-hidden="true"><path d={arrow} fill="#222" /></svg>
      </button>
    </div>
  );
}

/* ---------- document ---------- */

function DocumentPage() {
  return (
    <article className="mt-0.5 mr-1.5 ml-0.5 flex-1 overflow-hidden border border-b-0 border-[#222] bg-white pt-[60px] pl-16 text-[8px] leading-5 whitespace-nowrap text-[#666]">
      <div className="flex flex-col gap-2.5">
        <h2 className="text-[9px] font-bold text-black">译文: 50 条最鼓舞人心的旅游格言，让你终身受用</h2>
        <div className="text-[#2f4f6c] [font-feature-settings:'halt']">
          <p><mark className="rounded bg-[#7ab8ea] text-inherit">丹尼尔提出了 <b>50</b> 条最鼓舞人心的旅游格言，备受关注，现在他又提出了 <b>50</b> 条供大家分享！</mark></p>
          <p><mark className="rounded bg-[#7ab8ea] px-0.5">&nbsp;</mark></p>
          <p><mark className="rounded bg-[#7ab8ea] text-inherit">如果你长时间漫步于不列颠群岛的乡村小道，你会发现沿路堆砌的小石子。</mark><span className="border-r border-black py-px" /></p>
        </div>
        {PARAGRAPHS.map((lines) => (
          <p key={lines[0]} className="indent-4 [font-feature-settings:'halt']">
            {lines.map((line, i) => (
              <span key={line}>
                {i > 0 ? <br /> : null}
                {line}
              </span>
            ))}
          </p>
        ))}
      </div>
    </article>
  );
}

function DocumentPane() {
  return (
    <section className="mt-0.5 flex min-w-0 flex-1 flex-col border-2 border-white bg-[#5f5f5f]">
      <div className="flex min-h-0 flex-1">
        <div className="flex min-w-0 flex-1 border-t-2 border-l-2 border-[#444]">
          <DocumentPage />
        </div>
        <div className="flex w-3.5 shrink-0 flex-col bg-gradient-to-r from-[#aaa] to-[#d4d4d4]">
          <button type="button" aria-label="向上滚动" className="flex h-4 items-center justify-center border border-[#888] bg-[#f5f5f5]">
            <Caret className="h-1 w-1.5 rotate-180 text-[#666]" />
          </button>
          <div className="flex h-12 flex-col items-center justify-center gap-0.5 border border-[#888] bg-gradient-to-r from-white to-[#dedede]">
            <span className="h-px w-1.5 bg-[#777]" />
            <span className="h-px w-1.5 bg-[#777]" />
            <span className="h-px w-1.5 bg-[#777]" />
          </div>
          <button type="button" aria-label="向下滚动" className="mt-auto flex h-[15px] items-center justify-center border border-[#888] bg-[#f5f5f5]">
            <Caret />
          </button>
        </div>
      </div>
      <div className="flex h-[34px] shrink-0 items-center border-t-2 border-[#888] bg-[#f6f6f6] pl-0.5">
        <Tool label="选项" menu><Gears /></Tool>
        <button type="button" aria-label="更多" className="mr-0.5 ml-1"><Chevrons /></button>
        <div className="flex items-center gap-1">
          <Tool label="第一页" faded><CircleIcon d="M8 7v10M16 7l-5 5 5 5" /></Tool>
          <Tool label="上一页" faded><CircleIcon d="M14.500 7l-5 5 5 5" /></Tool>
          <label className="flex h-[26px] w-[90px] items-center rounded border-2 border-[#b0b0b0] bg-white pr-0.5">
            <input aria-label="页码" defaultValue="1" className="min-w-0 flex-1 text-right text-[13px] text-black outline-none" />
            <span className="ml-0.5 text-base leading-4 font-light text-[#777]">/</span>
            <span className="mb-1 ml-0.5 text-[10px] text-[#555]">5</span>
          </label>
          <Tool label="下一页"><CircleIcon d="M9.500 7l5 5-5 5" /></Tool>
          <Tool label="最后一页"><CircleIcon d="M7 7l5 5-5 5M16 7v10" /></Tool>
        </div>
        <Sep className="mx-[5px] h-6" />
        <button type="button" aria-label="更多"><Chevrons /></button>
        <button type="button" aria-label="页面布局" className="ml-1 w-6"><Icon><Sheet /></Icon></button>
        <button type="button" aria-label="更多" className="mr-1 ml-1"><Chevrons /></button>
        <ZoomSelect id="zoom-bottom" className="h-[26px] w-[82px]" />
        <Sep className="mr-[7px] ml-[5px] h-6" />
        <button type="button" aria-label="更多"><Chevrons /></button>
        <button type="button" aria-label="更多" className="ml-auto"><Chevrons /></button>
        <CollapseMark className="mt-1 mr-0.5 rotate-180 self-start" />
      </div>
    </section>
  );
}

function Workspace() {
  return (
    <div className="flex min-w-0 flex-1 flex-col">
      <div className="flex h-[25px] shrink-0 border-t-2 border-[#444] bg-[#585858]">
        <button type="button" className="flex w-[89px] items-center bg-gradient-to-b from-[#fdf3d2] to-[#ffe08a] pr-1.5 pl-[7px]">
          旅游格言<span className="ml-1 flex-1 text-left text-[#234f7d]">*</span>
          <CloseX className="mb-1.5 size-[5px] text-black" />
        </button>
        <button type="button" aria-label="新标签页" className="flex w-5 items-center justify-center border-r border-[#333]">
          <svg viewBox="0 0 8 8" className="size-2" aria-hidden="true"><path d="M4 0v8M0 4h8" stroke="#fff" strokeWidth="2.500" /></svg>
        </button>
        <button type="button" aria-label="关闭文档" className="mr-0.5 ml-auto flex w-5 items-center justify-center border-x border-[#333]">
          <CloseX className="size-2 text-white" width={1.8} />
        </button>
      </div>
      <div className="flex min-h-0 flex-1 border-2 border-[#ffe08a] bg-[#949494] bg-[radial-gradient(#8c8c8c_1px,transparent_1px)] bg-[size:4px_4px] pr-0.5 pl-px">
        <BookmarksPane />
        <Splitter arrow="M4 0v6L0 3z" className="pt-[190px]" />
        <DocumentPane />
      </div>
    </div>
  );
}

/* ---------- properties pane ---------- */

function GroupRow({ title }: { title: string }) {
  return (
    <tr className="h-[22px] border-y border-[#e4e4e4] bg-gradient-to-b from-[#f1f1f1] to-[#f9f9f9]">
      <th colSpan={2} scope="colgroup" className="p-0 text-left font-bold text-[#808080]">
        <button type="button" className="flex items-center gap-[5px] pl-0.5">
          <svg viewBox="0 0 6 6" className="mb-0.5 size-1.5" aria-hidden="true"><path d="M6 0v6H0z" fill="#222" /></svg>
          {title}
        </button>
      </th>
    </tr>
  );
}

function PropRow({ label, children }: { label: string; children: ReactNode }) {
  return (
    <tr className="h-[25px] border-b border-[#e4e4e4]">
      <th scope="row" className="border-r border-[#e4e4e4] p-0 pr-[3px] text-right font-normal text-[#8c8c8c]">{label}</th>
      <td className="p-0 pl-0.5 text-black">{children}</td>
    </tr>
  );
}

function Watermark() {
  return (
    <div className="absolute right-[42px] bottom-3 h-[88px] w-[182px] text-white [-webkit-text-stroke:2px_#dedede] [paint-order:stroke_fill]">
      <span className="absolute top-6 left-0.5 text-[40px] leading-8 font-bold">Bai</span>
      <div className="absolute top-0 left-[61px]"><PawMark /></div>
      <span className="absolute top-7 left-[73px] text-2xl leading-7 font-bold">du</span>
      <span className="absolute top-6 right-1.5 text-[30px] leading-8 font-bold">经验</span>
      <span className="absolute top-[60px] left-1 text-xl leading-6">jingyan.baidu.com</span>
    </div>
  );
}

function PropertiesPane() {
  return (
    <aside className="relative flex w-[293px] shrink-0 flex-col border-t-2 border-r-[3px] border-b-2 border-[#666] bg-[#f7f7f7]">
      <div className="flex h-[26px] shrink-0 items-center justify-between border-b border-[#888] bg-gradient-to-b from-[#f7f7f7] to-[#ececec] pr-[5px] pl-[5px]">
        <h2>书签 属性</h2>
        <button type="button" aria-label="关闭属性" className="mb-1.5"><CloseX /></button>
      </div>
      <div className="mr-0.5 mb-0.5 ml-0.5 flex-1 border-x border-b border-[#aaa] bg-white">
        <table className="w-full table-fixed border-collapse">
          <colgroup>
            <col className="w-[105px]" />
            <col />
          </colgroup>
          <tbody>
            <GroupRow title="常规" />
            <PropRow label="标题">
              <span className="block overflow-hidden whitespace-nowrap">丹尼尔提出了 50 条最鼓舞人心...</span>
            </PropRow>
            <GroupRow title="样式" />
            <PropRow label="填充颜色">
              <span className="flex items-center gap-[3px]">
                <span className="size-[21px] rounded-xs bg-black" />
                0,0,0
              </span>
            </PropRow>
            <PropRow label="粗体">否</PropRow>
            <PropRow label="斜体">否</PropRow>
            <GroupRow title="动作" />
            <PropRow label="鼠标释放">
              <span className="flex items-center justify-between pr-1 font-bold">
                转到文档中的某页
                <button type="button" aria-label="编辑动作" className="flex h-6 items-center gap-0.5 border-l border-[#e4e4e4] pl-1">
                  <span className="size-0.5 bg-[#222]" />
                  <span className="size-0.5 bg-[#222]" />
                  <span className="size-0.5 bg-[#222]" />
                </button>
              </span>
            </PropRow>
          </tbody>
        </table>
      </div>
      <Watermark />
    </aside>
  );
}

/** Green tutorial callouts drawn over the window. */
function Callouts() {
  return (
    <div className="pointer-events-none absolute inset-0 overflow-hidden">
      <div className="absolute top-[163px] right-5 h-[282px] w-[303px] border-[3px] border-[#34823a]" />
      <div className="absolute top-[181px] right-[226px] h-9 w-[72px] border-[3px] border-[#34823a]" />
      <svg viewBox="0 0 294 182" className="absolute top-[411px] right-[186px] h-[182px] w-[294px]" aria-hidden="true">
        <path d="M0 182L277 7l-3-4 19-2-9 15-3-4L4 181z" fill="#34823a" />
      </svg>
    </div>
  );
}

export default function App() {
  return (
    <div className="relative flex h-screen flex-col overflow-hidden bg-[#e6e6e6] font-['Noto_Sans','Noto_Sans_CJK_SC',sans-serif] text-xs text-[#111]">
      <TitleBar />
      <div className="mx-[5px] mb-[5px] flex min-h-0 flex-1 flex-col">
        <div className="flex shrink-0 flex-col border-l border-[#ccc] bg-[#f7f7f7]">
          <MenuBar />
          <Toolbar />
          <FormatBar />
        </div>
        <main className="flex min-h-0 flex-1 bg-[#949494]">
          <Workspace />
          <Splitter arrow="M0 0v6l4-3z" className="pt-[205px]" />
          <PropertiesPane />
        </main>
      </div>
      <Callouts />
    </div>
  );
}
